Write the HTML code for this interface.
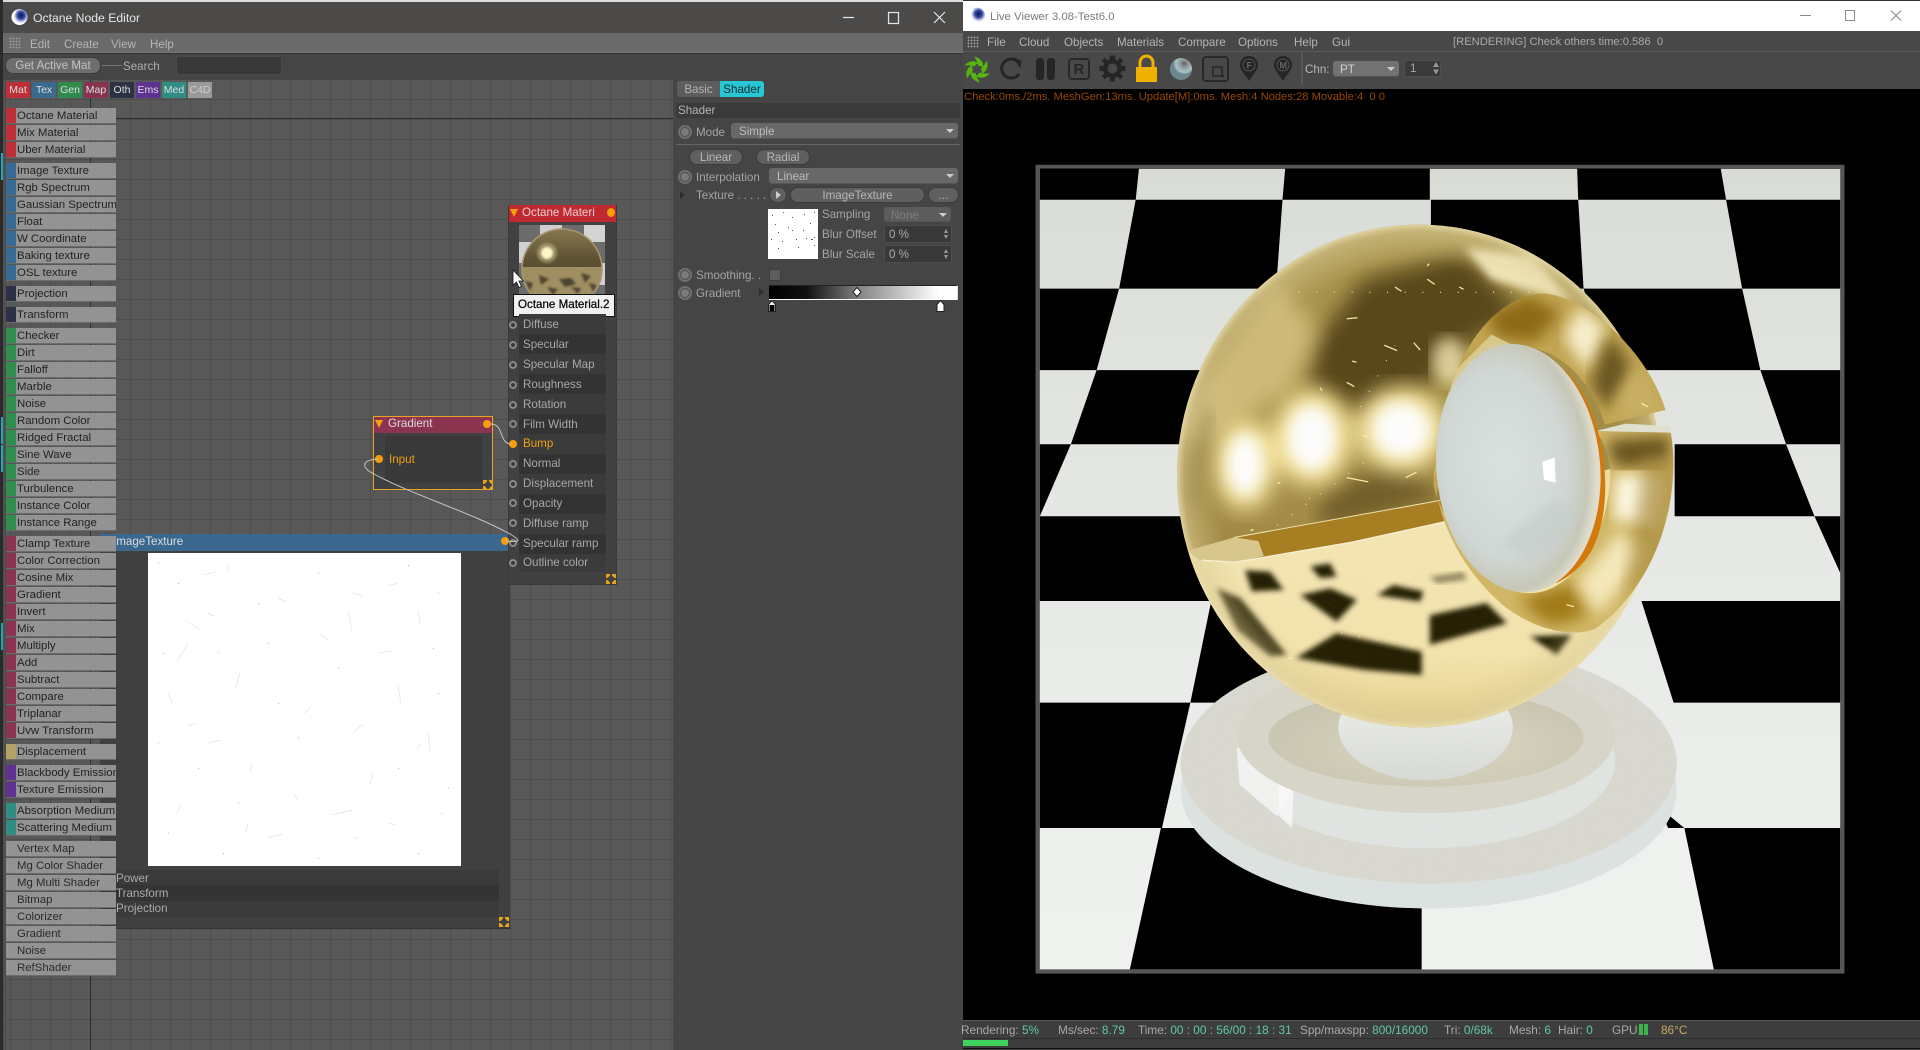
<!DOCTYPE html>
<html><head><meta charset="utf-8"><title>Octane</title>
<style>
*{box-sizing:border-box}
html,body{margin:0;padding:0;width:1920px;height:1050px;overflow:hidden;background:#222;font-family:"Liberation Sans",sans-serif}
.a{position:absolute}
.t{position:absolute;white-space:nowrap;line-height:14px;height:14px;margin-top:1px}
.li{position:absolute;left:6px;width:110px;height:16px;background:#939393;border-bottom:1.5px solid #6b6b6b;font-size:11.4px;line-height:17px;color:#222;padding-left:11px;white-space:nowrap;overflow:hidden}
.li i{position:absolute;left:0;top:0;width:10px;height:16px}
.tab{position:absolute;top:82px;width:24px;height:16px;font-size:10.5px;line-height:17px;text-align:center;color:#ddd}
.r{position:absolute;left:519px;width:87px;height:20px}
.s{position:absolute;left:509px;width:8px;height:8px;border-radius:50%;border:2px solid #8a8a8a;background:#3a3a3a}
.l{position:absolute;left:523px;font-size:11.6px;line-height:14px;color:#a8a8a8;white-space:nowrap;margin-top:1px}
.rd{position:absolute;left:678px;width:14px;height:14px;border-radius:50%;border:2px solid #6e6e6e;background:#7a7a7a;box-shadow:inset 0 0 0 1px #4a4a4a}
.lb{position:absolute;font-size:11.6px;line-height:14px;color:#a5a5a5;white-space:nowrap;margin-top:1px}
.dd{position:absolute;background:#686868;border-radius:3px;font-size:11.6px;line-height:16px;color:#bdbdbd;padding:1px 0 0 8px;box-shadow:inset 0 -1px 0 #555}
.dd:after{content:"";position:absolute;right:4px;top:6px;border-left:4px solid transparent;border-right:4px solid transparent;border-top:4px solid #ccc}
.bt{position:absolute;background:#5f5f5f;border-radius:9px;border:1px solid #3c3c3c;font-size:11.6px;line-height:14px;color:#b8b8b8;text-align:center;white-space:nowrap;padding-top:1px}
.fld{position:absolute;left:884px;width:68px;height:18px;background:#393939;border:1px solid #4d4d4d;border-radius:2px;font-size:11.6px;line-height:16px;color:#aaa;padding:1px 0 0 4px}
.fld:after{content:"";position:absolute;right:3px;top:3px;border-left:2.5px solid transparent;border-right:2.5px solid transparent;border-bottom:4px solid #999}
.fld:before{content:"";position:absolute;right:3px;bottom:3px;border-left:2.5px solid transparent;border-right:2.5px solid transparent;border-top:4px solid #999}
.m{position:absolute;top:35px;font-size:11.6px;line-height:14px;color:#b5b5b5;white-space:nowrap}
.m2{position:absolute;top:36px;font-size:11.6px;line-height:14px;color:#b5b5b5;white-space:nowrap}
.st{position:absolute;top:1023px;font-size:11.8px;line-height:14px;color:#a8a8a8;white-space:nowrap}
.st b{font-weight:normal;color:#5fc7a7}
.dots{background-image:radial-gradient(#999 0.8px,transparent 1px);background-size:3px 3px}
</style></head><body>

<!-- left window -->
<div class="a" style="left:0;top:0;width:3px;height:1050px;background:#2b2b2b"></div>
<div class="a" style="left:1px;top:153px;width:2px;height:27px;background:#1fa9b8"></div>
<div class="a" style="left:1px;top:417px;width:2px;height:27px;background:#1fa9b8"></div>
<div class="a" style="left:1px;top:445px;width:2px;height:27px;background:#1fa9b8"></div>
<div class="a" style="left:1px;top:623px;width:2px;height:27px;background:#1fa9b8"></div>

<div class="a" style="left:3px;top:0;width:960px;height:33px;background:#4b4a48;border-top:2px solid #dcdcdc"></div>
<svg class="a" style="left:10px;top:7px" width="20" height="20" viewBox="0 0 20 20"><defs><radialGradient id="c4" cx=".6" cy=".4"><stop offset="0" stop-color="#0c1440"/><stop offset=".45" stop-color="#3346a8"/><stop offset=".8" stop-color="#c9cde8"/><stop offset="1" stop-color="#fff"/></radialGradient></defs><circle cx="9.5" cy="10" r="8" fill="url(#c4)"/><path d="M6 4.5A6.5 6.5 0 0 0 6 15" stroke="#fff" stroke-width="1.6" fill="none"/></svg>
<div class="t" style="left:33px;top:10px;font-size:12.2px;color:#e6e6e6">Octane Node Editor</div>
<svg class="a" style="left:840px;top:8px" width="112" height="20" fill="none" stroke="#e8e8e8" stroke-width="1.2"><path d="M3 9.5H14"/><rect x="48.5" y="4.5" width="10" height="11"/><path d="M94 4L105 15M105 4L94 15"/></svg>

<div class="a" style="left:3px;top:33px;width:960px;height:20px;background:#6a6a6a;border-bottom:1px solid #777"></div>
<div class="a" style="left:3px;top:53px;width:960px;height:1px;background:#333"></div>
<div class="a dots" style="left:9px;top:37px;width:12px;height:12px"></div>
<div class="m" style="left:30px;top:38px">Edit</div><div class="m" style="left:64px;top:38px">Create</div><div class="m" style="left:111px;top:38px">View</div><div class="m" style="left:150px;top:38px">Help</div>

<div class="a" style="left:3px;top:54px;width:960px;height:26px;background:#454545"></div>
<div class="bt" style="left:5px;top:57px;width:96px;height:17px;line-height:14px;border-radius:8px;background:#6e6e6e;color:#c4c4c4">Get Active Mat</div>
<div class="a" style="left:102px;top:65px;width:20px;height:1px;background:#777"></div>
<div class="lb" style="left:123px;top:59px;color:#b0b0b0">Search</div>
<div class="a" style="left:176px;top:56px;width:106px;height:19px;background:#383838;border:1px solid #4b4b4b;border-radius:3px"></div>

<!-- grid -->
<div class="a" style="left:3px;top:80px;width:670px;height:970px;background-color:#585858;background-image:linear-gradient(#4e4e4e 1px,transparent 1px),linear-gradient(90deg,#4e4e4e 1px,transparent 1px);background-size:20px 20px;background-position:0 19px,7px 0"></div>
<div class="a" style="left:3px;top:118px;width:670px;height:1px;background:#2d2d2d"></div>
<div class="a" style="left:90px;top:80px;width:1px;height:970px;background:#2d2d2d"></div>
<div class="a" style="left:3px;top:80px;width:3px;height:970px;background:#4f4f4f"></div>

<!-- tabs -->
<div class="tab" style="left:6px;background:#bf2f37">Mat</div>
<div class="tab" style="left:32px;background:#3a6a8e">Tex</div>
<div class="tab" style="left:58px;background:#2f8a4c">Gen</div>
<div class="tab" style="left:84px;background:#87334f">Map</div>
<div class="tab" style="left:110px;background:#2d3144">Oth</div>
<div class="tab" style="left:136px;background:#5f3291">Ems</div>
<div class="tab" style="left:162px;background:#2f8d83">Med</div>
<div class="tab" style="left:188px;background:#9a9a9a;color:#ccc">C4D</div>

<!-- image texture node -->
<div class="a" style="left:100px;top:534px;width:410px;height:395px;background:#404040;border-bottom:1px solid #333"></div>
<div class="a" style="left:100px;top:534px;width:410px;height:17px;background:#3a688f"></div>
<div class="t" style="left:113px;top:534px;font-size:11.6px;color:#ddd">ImageTexture</div>
<div class="a" style="left:148px;top:553px;width:313px;height:313px;background:#fff"></div>
<svg class="a" style="left:148px;top:553px" width="313" height="313" fill="none" stroke="#e2e2e2" stroke-width=".7"><path d="M37 67l14 9M40 90l-11 18M200 58l4 20M270 57l2 15M55 22l12-3M130 45l8 4M172 81l8 6M240 33l10-3M20 140l4 10M92 120l-5 16M162 155l-6 5M205 180l10-9M60 190l13-3M250 132l3 19M104 210l-2 9M29 260l4-8M183 262l22-5M225 220l-3 12M280 180l2 18M120 285l14-4M205 40l9 3M145 240l6 8M60 60l6 3M240 270l8 2M296 262l-5-3M273 190l-4 6M230 100l14-2M40 173l8-3M100 270l-2 9"/><path d="M10 10l1 0M30 30l1 1M80 15l1 0M110 50l1 1M170 20l1 0M260 12l1 1M290 40l1 0M15 100l1 1M70 100l1 0M120 90l1 1M190 115l1 0M285 95l1 1M10 190l1 0M50 215l1 1M150 185l1 0M250 215l1 1M300 235l1 0M20 280l1 0M75 300l1 1M170 305l1 0M270 300l1 1M208 285l1 0M130 150l1 1M90 250l1 0M290 140l1 1" stroke="#bbb" stroke-width="1"/></svg>
<div class="a" style="left:100px;top:870px;width:399px;height:15px;background:#3a3a3a"></div>
<div class="a" style="left:100px;top:885px;width:399px;height:16px;background:#343434"></div>
<div class="a" style="left:100px;top:901px;width:399px;height:16px;background:#3a3a3a"></div>
<div class="t" style="left:116px;top:871px;font-size:11.6px;color:#aaa">Power</div>
<div class="t" style="left:116px;top:886px;font-size:11.6px;color:#aaa">Transform</div>
<div class="t" style="left:116px;top:901px;font-size:11.6px;color:#aaa">Projection</div>
<svg class="a" style="left:499px;top:917px" width="10" height="10" fill="#e5a41a"><path d="M0 0h4v1.5L1.500 4H0zM10 0H6v1.500L8.500 4H10zM0 10h4V8.500L1.500 6H0zM10 10H6V8.500L8.500 6H10z"/></svg>

<!-- octane material node -->
<div class="a" style="left:508px;top:205px;width:109px;height:380px;background:#414141;border:1px solid #383838"></div>
<div class="a" style="left:509px;top:205px;width:107px;height:17px;background:#c0292f"></div>
<svg class="a" style="left:510px;top:208px" width="10" height="10"><path d="M0 1H8L4 9z" fill="#f0a010"/></svg>
<div class="t" style="left:522px;top:205px;font-size:11.6px;color:#e8d0d0">Octane Materi</div>
<div class="a" style="left:607px;top:208px;width:8px;height:9px;border-radius:50%;background:#f59e0b"></div>
<svg class="a" style="left:519px;top:225px" width="86" height="72" viewBox="0 0 86 72">
<defs><linearGradient id="ps" x1="0" y1="0" x2="0" y2="1"><stop offset="0" stop-color="#857850"/><stop offset=".4" stop-color="#5c5032"/><stop offset=".55" stop-color="#5a4d30"/></linearGradient><clipPath id="pc"><circle cx="43" cy="44" r="40"/></clipPath><filter id="pb"><feGaussianBlur stdDeviation="1"/></filter></defs>
<rect width="86" height="72" fill="#6c6c6c"/><rect x="21" y="0" width="22" height="17" fill="#cfcfcf"/><rect x="65" y="0" width="21" height="17" fill="#d4d4d4"/><rect x="0" y="17" width="21" height="21" fill="#d0d0d0"/><rect x="43" y="17" width="22" height="21" fill="#cfcfcf"/><rect x="21" y="38" width="22" height="22" fill="#cfcfcf"/><rect x="65" y="38" width="21" height="22" fill="#cfcfcf"/>
<circle cx="43" cy="44" r="40" fill="url(#ps)"/>
<g clip-path="url(#pc)"><rect x="0" y="42" width="86" height="44" fill="#a08f62"/><path d="M20 50l10 4-8 6zM40 54l12-1 5 6-11 3zM62 48l10 3-6 7zM6 56l8 2-3 8zM28 62l11 2-5 6zM52 62l10 1-3 6zM70 58l8 2-4 7z" fill="#4e4530" filter="url(#pb)"/></g>
<circle cx="28" cy="28" r="10" fill="#f7e8b0" filter="url(#pb)" opacity=".35"/><circle cx="28" cy="28" r="6" fill="#fff7c8" filter="url(#pb)"/>
<circle cx="43" cy="44" r="40" fill="none" stroke="#a9966a" stroke-width="1.500"/></svg>
<svg class="a" style="left:512px;top:269px" width="14" height="20"><path d="M1 1V16L4.500 13 7 18.500 9.500 17.500 7 12H11.500z" fill="#fff" stroke="#111" stroke-width=".8"/></svg>
<div class="a" style="left:513px;top:294px;width:102px;height:23px;background:#f0f0f0;border:1.500px solid #111"></div>
<div class="t" style="left:518px;top:297px;font-size:11.6px;color:#0a0a0a;-webkit-text-stroke:.25px #000">Octane Material.2</div>

<div class="r" style="top:314px;background:#3b3b3b"></div><div class="r" style="top:334px;background:#333"></div><div class="r" style="top:354px;background:#3b3b3b"></div><div class="r" style="top:374px;background:#333"></div><div class="r" style="top:394px;background:#3b3b3b"></div><div class="r" style="top:414px;background:#333"></div><div class="r" style="top:434px;background:#3b3b3b"></div><div class="r" style="top:454px;background:#333"></div><div class="r" style="top:474px;background:#3b3b3b"></div><div class="r" style="top:494px;background:#333"></div><div class="r" style="top:514px;background:#3b3b3b"></div><div class="r" style="top:534px;background:#333"></div><div class="r" style="top:554px;height:18px;background:#3b3b3b"></div>
<div class="s" style="top:321px"></div><div class="l" style="top:317px">Diffuse</div>
<div class="s" style="top:341px"></div><div class="l" style="top:337px">Specular</div>
<div class="s" style="top:361px"></div><div class="l" style="top:357px">Specular Map</div>
<div class="s" style="top:381px"></div><div class="l" style="top:377px">Roughness</div>
<div class="s" style="top:401px"></div><div class="l" style="top:397px">Rotation</div>
<div class="s" style="top:420px"></div><div class="l" style="top:417px">Film Width</div>
<div class="s" style="top:440px;background:#f59e0b;border-color:#f59e0b"></div><div class="l" style="top:436px;color:#f0a010">Bump</div>
<div class="s" style="top:460px"></div><div class="l" style="top:456px">Normal</div>
<div class="s" style="top:480px"></div><div class="l" style="top:476px">Displacement</div>
<div class="s" style="top:499px"></div><div class="l" style="top:496px">Opacity</div>
<div class="s" style="top:519px"></div><div class="l" style="top:516px">Diffuse ramp</div>
<div class="s" style="top:539px"></div><div class="l" style="top:536px">Specular ramp</div>
<div class="s" style="top:559px"></div><div class="l" style="top:555px">Outline color</div>
<svg class="a" style="left:606px;top:574px" width="10" height="10" fill="#e5a41a"><path d="M0 0h4v1.500L1.500 4H0zM10 0H6v1.500L8.500 4H10zM0 10h4V8.500L1.500 6H0zM10 10H6V8.500L8.500 6H10z"/></svg>

<!-- gradient node -->
<div class="a" style="left:373px;top:416px;width:120px;height:74px;background:#414141;border:1px solid #eaa420"></div>
<div class="a" style="left:374px;top:417px;width:118px;height:16px;background:#8a3450"></div>
<svg class="a" style="left:375px;top:419px" width="10" height="10"><path d="M0 1H8L4 9z" fill="#f0a010"/></svg>
<div class="t" style="left:388px;top:416px;font-size:11.6px;color:#ddd">Gradient</div>
<div class="a" style="left:385px;top:436px;width:97px;height:47px;background:#393939"></div>
<div class="t" style="left:389px;top:452px;font-size:11.6px;color:#f0a010">Input</div>
<div class="a" style="left:375px;top:455px;width:8px;height:8px;border-radius:50%;background:#f59e0b"></div>
<div class="a" style="left:483px;top:420px;width:8px;height:8px;border-radius:50%;background:#f59e0b"></div>
<div class="a" style="left:501px;top:537px;width:8px;height:8px;border-radius:50%;background:#f59e0b"></div>
<svg class="a" style="left:483px;top:480px" width="10" height="10" fill="#e5a41a"><path d="M0 0h4v1.500L1.500 4H0zM10 0H6v1.500L8.500 4H10zM0 10h4V8.500L1.500 6H0zM10 10H6V8.500L8.500 6H10z"/></svg>

<!-- wires -->
<svg class="a" style="left:0;top:0" width="640" height="600" fill="none" stroke="#c4c4c4" stroke-width="1"><path d="M491 424C504 424 499 444 511 444"/><path d="M378 459C360 460 362 468 374 474C410 494 470 512 510 534C525 543 516 542 506 541"/></svg>

<!-- list -->
<div class="li" style="top:108px"><i style="background:#bf2f37"></i>Octane Material</div>
<div class="li" style="top:125px"><i style="background:#bf2f37"></i>Mix Material</div>
<div class="li" style="top:142px"><i style="background:#bf2f37"></i>Uber Material</div>
<div class="li" style="top:163px"><i style="background:#376b95"></i>Image Texture</div>
<div class="li" style="top:180px"><i style="background:#376b95"></i>Rgb Spectrum</div>
<div class="li" style="top:197px"><i style="background:#376b95"></i>Gaussian Spectrum</div>
<div class="li" style="top:214px"><i style="background:#376b95"></i>Float</div>
<div class="li" style="top:231px"><i style="background:#376b95"></i>W Coordinate</div>
<div class="li" style="top:248px"><i style="background:#376b95"></i>Baking texture</div>
<div class="li" style="top:265px"><i style="background:#376b95"></i>OSL texture</div>
<div class="li" style="top:286px"><i style="background:#2d3148"></i>Projection</div>
<div class="li" style="top:307px"><i style="background:#2d3148"></i>Transform</div>
<div class="li" style="top:328px"><i style="background:#2f8f4e"></i>Checker</div>
<div class="li" style="top:345px"><i style="background:#2f8f4e"></i>Dirt</div>
<div class="li" style="top:362px"><i style="background:#2f8f4e"></i>Falloff</div>
<div class="li" style="top:379px"><i style="background:#2f8f4e"></i>Marble</div>
<div class="li" style="top:396px"><i style="background:#2f8f4e"></i>Noise</div>
<div class="li" style="top:413px"><i style="background:#2f8f4e"></i>Random Color</div>
<div class="li" style="top:430px"><i style="background:#2f8f4e"></i>Ridged Fractal</div>
<div class="li" style="top:447px"><i style="background:#2f8f4e"></i>Sine Wave</div>
<div class="li" style="top:464px"><i style="background:#2f8f4e"></i>Side</div>
<div class="li" style="top:481px"><i style="background:#2f8f4e"></i>Turbulence</div>
<div class="li" style="top:498px"><i style="background:#2f8f4e"></i>Instance Color</div>
<div class="li" style="top:515px"><i style="background:#2f8f4e"></i>Instance Range</div>
<div class="li" style="top:536px"><i style="background:#8b3350"></i>Clamp Texture</div>
<div class="li" style="top:553px"><i style="background:#8b3350"></i>Color Correction</div>
<div class="li" style="top:570px"><i style="background:#8b3350"></i>Cosine Mix</div>
<div class="li" style="top:587px"><i style="background:#8b3350"></i>Gradient</div>
<div class="li" style="top:604px"><i style="background:#8b3350"></i>Invert</div>
<div class="li" style="top:621px"><i style="background:#8b3350"></i>Mix</div>
<div class="li" style="top:638px"><i style="background:#8b3350"></i>Multiply</div>
<div class="li" style="top:655px"><i style="background:#8b3350"></i>Add</div>
<div class="li" style="top:672px"><i style="background:#8b3350"></i>Subtract</div>
<div class="li" style="top:689px"><i style="background:#8b3350"></i>Compare</div>
<div class="li" style="top:706px"><i style="background:#8b3350"></i>Triplanar</div>
<div class="li" style="top:723px"><i style="background:#8b3350"></i>Uvw Transform</div>
<div class="li" style="top:744px"><i style="background:#b3a268"></i>Displacement</div>
<div class="li" style="top:765px"><i style="background:#5f3291"></i>Blackbody Emission</div>
<div class="li" style="top:782px"><i style="background:#5f3291"></i>Texture Emission</div>
<div class="li" style="top:803px"><i style="background:#2f8d83"></i>Absorption Medium</div>
<div class="li" style="top:820px"><i style="background:#2f8d83"></i>Scattering Medium</div>
<div class="li" style="top:841px;color:#2a2a2a">Vertex Map</div>
<div class="li" style="top:858px;color:#2a2a2a">Mg Color Shader</div>
<div class="li" style="top:875px;color:#2a2a2a">Mg Multi Shader</div>
<div class="li" style="top:892px;color:#2a2a2a">Bitmap</div>
<div class="li" style="top:909px;color:#2a2a2a">Colorizer</div>
<div class="li" style="top:926px;color:#2a2a2a">Gradient</div>
<div class="li" style="top:943px;color:#2a2a2a">Noise</div>
<div class="li" style="top:960px;color:#2a2a2a">RefShader</div>

<!-- attribute panel -->
<div class="a" style="left:673px;top:80px;width:290px;height:970px;background:#454545"></div>
<div class="a" style="left:677px;top:81px;width:43px;height:16px;background:#5d5d5d;border-radius:3px 0 0 3px;font-size:11.6px;line-height:17px;color:#b4b4b4;text-align:center">Basic</div>
<div class="a" style="left:720px;top:81px;width:44px;height:16px;background:#27c7d6;border-radius:0 3px 3px 0;font-size:11.6px;line-height:17px;color:#102a2e;text-align:center">Shader</div>
<div class="a" style="left:676px;top:103px;width:284px;height:15px;background:#3a3a3a;font-size:11.6px;line-height:16px;color:#b5b5b5;padding-left:2px">Shader</div>
<div class="rd" style="top:125px"></div><div class="lb" style="left:696px;top:125px">Mode</div>
<div class="dd" style="left:731px;top:123px;width:227px;height:16px">Simple</div>
<div class="a" style="left:676px;top:144px;width:284px;height:1px;background:#666"></div>
<div class="bt" style="left:689px;top:149px;width:54px;height:16px">Linear</div>
<div class="bt" style="left:756px;top:149px;width:54px;height:16px">Radial</div>
<div class="rd" style="top:170px"></div><div class="lb" style="left:696px;top:170px">Interpolation</div>
<div class="dd" style="left:769px;top:168px;width:189px;height:16px">Linear</div>
<svg class="a" style="left:680px;top:191px" width="6" height="8"><path d="M0 0L5 4 0 8z" fill="#2e2e2e"/></svg>
<div class="lb" style="left:696px;top:188px">Texture . . . . .</div>
<div class="bt" style="left:769px;top:187px;width:18px;height:16px"></div>
<svg class="a" style="left:776px;top:191px" width="6" height="8"><path d="M0 0L5 4 0 8z" fill="#ccc"/></svg>
<div class="bt" style="left:790px;top:187px;width:135px;height:16px">ImageTexture</div>
<div class="bt" style="left:928px;top:187px;width:31px;height:16px">...</div>
<div class="a" style="left:768px;top:209px;width:50px;height:50px;background:#fff"></div>
<svg class="a" style="left:768px;top:209px" width="50" height="50" fill="#555"><path d="M4 6h1v1H4zM15 3h1v1h-1zM24 8h1v1h-1zM36 5h1v1h-1zM46 3h1v1h-1zM7 15h1v1H7zM20 18h1v1h-1zM42 14h1v1h-1zM10 23h1v1H10zM24 21h1v1h-1zM35 21h1v1h-1zM46 28h1v1h-1zM3 30h1v1H3zM14 32h1v1h-1zM28 30h1v1h-1zM38 29h1v1h-1zM43 30h2v1h-2zM10 39h1v1H10zM30 38h1v1h-1zM46 36h1v1h-1z"/></svg>
<div class="lb" style="left:822px;top:207px">Sampling</div>
<div class="dd" style="left:884px;top:207px;width:67px;height:15px;background:#5c5c5c;color:#7f7f7f;line-height:15px;padding-left:7px">None</div>
<div class="lb" style="left:822px;top:227px">Blur Offset</div>
<div class="fld" style="top:225px">0 %</div>
<div class="lb" style="left:822px;top:247px">Blur Scale</div>
<div class="fld" style="top:245px">0 %</div>
<div class="rd" style="top:268px"></div><div class="lb" style="left:696px;top:268px">Smoothing. .</div>
<div class="a" style="left:769px;top:269px;width:12px;height:12px;background:#5d5d5d;border-radius:2px;border:1px solid #3e3e3e"></div>
<div class="rd" style="top:286px"></div><div class="lb" style="left:696px;top:286px">Gradient</div>
<svg class="a" style="left:759px;top:288px" width="6" height="8"><path d="M0 0L5 4 0 8z" fill="#2e2e2e"/></svg>
<div class="a" style="left:769px;top:285px;width:189px;height:15px;background:linear-gradient(90deg,#000,#111 20%,#8a8a8a 50%,#fff 90%);border-bottom:1.500px solid #fff;border-top:1px solid #222;border-right:1px solid #ddd"></div>
<svg class="a" style="left:852px;top:286px" width="10" height="12"><path d="M5 1.500L9 6 5 10.500 1 6z" fill="#fff" stroke="#222"/></svg>
<svg class="a" style="left:766px;top:299px" width="180" height="14"><path d="M2.500 12.500V5.500L6 1.500 9.500 5.500V12.500z" fill="#eee" stroke="#222"/><rect x="3.500" y="6" width="5" height="6" fill="#000"/><path d="M171 12.500V5.500L174.500 1.500 178 5.500V12.500z" fill="#fff" stroke="#222"/></svg>

<!-- live viewer -->
<div class="a" style="left:963px;top:0;width:957px;height:1050px;background:#000"></div>
<div class="a" style="left:963px;top:0;width:957px;height:31px;background:#fff;border-top:1px solid #333"></div>
<svg class="a" style="left:967px;top:5px" width="20" height="20" viewBox="0 0 20 20"><circle cx="10" cy="10.500" r="8" fill="url(#c4)"/><path d="M6 5A6.500 6.500 0 0 0 6 15.500" stroke="#fff" stroke-width="1.600" fill="none"/></svg>
<div class="t" style="left:990px;top:9px;font-size:11.4px;color:#7a7a7a">Live Viewer 3.08-Test6.0</div>
<svg class="a" style="left:1795px;top:6px" width="120" height="20" fill="none" stroke="#8a8a8a" stroke-width="1"><path d="M5 9.500H16"/><rect x="50.500" y="4.500" width="9" height="10"/><path d="M96 4.500L106 14.500M106 4.500L96 14.500"/></svg>
<div class="a" style="left:963px;top:31px;width:957px;height:58px;background:#484848"></div>
<div class="a" style="left:963px;top:51px;width:957px;height:1px;background:#5c5c5c"></div>
<div class="a dots" style="left:967px;top:36px;width:12px;height:12px"></div>
<div class="m2" style="left:987px">File</div><div class="m2" style="left:1019px">Cloud</div><div class="m2" style="left:1064px">Objects</div><div class="m2" style="left:1117px">Materials</div><div class="m2" style="left:1178px">Compare</div><div class="m2" style="left:1238px">Options</div><div class="m2" style="left:1294px">Help</div><div class="m2" style="left:1332px">Gui</div>
<div class="t" style="left:1453px;top:34px;font-size:11.200px;color:#aaa">[RENDERING] Check others time:0.586&nbsp; 0</div>
<!-- icons -->
<svg class="a" style="left:963px;top:52px" width="480" height="36" viewBox="963 52 480 36">
<g transform="translate(977 69.500) scale(.8)" fill="#56b50e"><path d="M1.500-4.500C1-9-1-12-3.500-16C3-15 9-10 7.500-2C6.500-3.500 4-5 1.500-4.500z"/><path d="M1.500-4.500C1-9-1-12-3.500-16C3-15 9-10 7.500-2C6.500-3.500 4-5 1.500-4.500z" transform="rotate(60)"/><path d="M1.500-4.500C1-9-1-12-3.500-16C3-15 9-10 7.500-2C6.500-3.500 4-5 1.500-4.500z" transform="rotate(120)"/><path d="M1.500-4.500C1-9-1-12-3.500-16C3-15 9-10 7.500-2C6.500-3.500 4-5 1.500-4.500z" transform="rotate(180)"/><path d="M1.500-4.500C1-9-1-12-3.500-16C3-15 9-10 7.500-2C6.500-3.500 4-5 1.500-4.500z" transform="rotate(240)"/><path d="M1.500-4.500C1-9-1-12-3.500-16C3-15 9-10 7.500-2C6.500-3.500 4-5 1.500-4.500z" transform="rotate(300)"/></g>
<path d="M1018 62A9.500 9.500 0 1 0 1019 74" fill="none" stroke="#252525" stroke-width="3"/><path d="M1014 58L1021 61 1020 67z" fill="#252525" stroke="#252525"/>
<rect x="1036" y="58" width="8" height="22" rx="3" fill="#252525"/><rect x="1047" y="58" width="8" height="22" rx="3" fill="#252525"/>
<rect x="1069" y="59" width="20" height="20" rx="3" fill="none" stroke="#252525" stroke-width="1.800"/><text x="1073.500" y="74" font-family="Liberation Sans" font-size="15" font-weight="bold" fill="#262626">R</text>
<g transform="translate(1112.500 68.500)"><circle r="9.500" fill="#252525"/><path d="M-2.500-13H2.500V-7H-2.500zM-2.500 13H2.500V7H-2.500zM-13-2.500V2.500H-7V-2.500zM13-2.500V2.500H7V-2.500zM-11-7.500L-7.500-11-4-6-6-4zM11 7.500L7.500 11 4 6 6 4zM11-7.500L7.500-11 4-6 6-4zM-11 7.500L-7.500 11-4 6-6 4z" fill="#252525"/><circle r="5" fill="#484848"/></g>
<rect x="1136" y="67" width="21" height="15" fill="#efb000"/><path d="M1140 67V62.500A6.500 6.500 0 0 1 1153 62.500V67" fill="none" stroke="#efb000" stroke-width="3"/>
<defs><radialGradient id="bb" cx=".65" cy=".25"><stop offset="0" stop-color="#6e5b50"/><stop offset=".35" stop-color="#8d9a9c"/><stop offset=".8" stop-color="#a9c3c7"/><stop offset="1" stop-color="#6d8790"/></radialGradient></defs><circle cx="1181" cy="69" r="11" fill="url(#bb)"/>
<rect x="1203" y="57" width="25" height="24" rx="3" fill="none" stroke="#252525" stroke-width="1.800"/><path d="M1213 67H1222V76H1213z" fill="none" stroke="#252525" stroke-width="1.500"/><circle cx="1222.500" cy="76" r="1.500" fill="#252525"/>
<path d="M1249 81C1243 72 1240 69 1240 65A9 9 0 0 1 1258 65C1258 69 1255 72 1249 81z" fill="#252525"/><circle cx="1249" cy="65" r="6" fill="none" stroke="#555"/><text x="1246.500" y="68.500" font-family="Liberation Sans" font-size="9" font-weight="bold" fill="#666">F</text>
<path d="M1283 81C1277 72 1274 69 1274 65A9 9 0 0 1 1292 65C1292 69 1289 72 1283 81z" fill="#252525"/><circle cx="1283" cy="65" r="6" fill="none" stroke="#555"/><text x="1279.500" y="68.500" font-family="Liberation Sans" font-size="9" font-weight="bold" fill="#666">M</text>
<path d="M1302 53V85" stroke="#6a6a6a"/>
</svg>
<div class="t" style="left:1305px;top:62px;font-size:11.600px;color:#b5b5b5">Chn:</div>
<div class="dd" style="left:1333px;top:61px;width:66px;height:16px;padding-left:7px;background:#727272;color:#d0d0d0">PT</div>
<div class="a" style="left:1404px;top:60px;width:37px;height:17px;background:#3a3a3a;border:1px solid #505050;border-radius:2px;font-size:11.600px;line-height:16px;color:#aaa;padding-left:5px">1</div>
<svg class="a" style="left:1433px;top:62px" width="6" height="13" fill="#999"><path d="M3 0L6 5H0zM0 7.500H6L3 12.500z"/></svg>
<div class="t" style="left:964px;top:89px;font-size:11.200px;color:#964805">Check:0ms./2ms. MeshGen:13ms. Update[M]:0ms. Mesh:4 Nodes:28 Movable:4&nbsp; 0 0</div>

<!-- render -->
<svg class="a" style="left:1020px;top:160px" width="840" height="830" viewBox="0 0 1568 1568" preserveAspectRatio="none">
<defs>
<filter id="b3"><feGaussianBlur stdDeviation="5"/></filter>
<filter id="b8"><feGaussianBlur stdDeviation="8"/></filter>
<filter id="b14"><feGaussianBlur stdDeviation="14"/></filter>
<filter id="b18"><feGaussianBlur stdDeviation="20"/></filter>
<filter id="gn" x="0" y="0" width="1" height="1"><feTurbulence type="fractalNoise" baseFrequency="1.100" numOctaves="2" seed="3"/><feColorMatrix values="0 0 0 0 .45 0 0 0 0 .42 0 0 0 0 .3 1.500 0 0 0 -.62"/></filter>
<linearGradient id="fl" x1="0" y1="0" x2="0" y2="1"><stop offset="0" stop-color="#d9dcd6"/><stop offset=".5" stop-color="#e7e9e6"/><stop offset="1" stop-color="#f0f2f0"/></linearGradient>
<linearGradient id="sg" x1="0" y1="0" x2="0" y2="1"><stop offset="0" stop-color="#ad9852"/><stop offset=".35" stop-color="#a38c44"/><stop offset=".65" stop-color="#a38a44"/></linearGradient>
<linearGradient id="lg" x1="0" y1="0" x2="0" y2="1"><stop offset="0" stop-color="#eddc9e"/><stop offset=".25" stop-color="#f5e7b4"/><stop offset=".7" stop-color="#f4e4ad"/><stop offset=".85" stop-color="#eddb9c"/><stop offset="1" stop-color="#dfc987"/></linearGradient>
<radialGradient id="edge" cx=".5" cy=".5" r=".5"><stop offset=".84" stop-color="#d9c88c" stop-opacity="0"/><stop offset=".97" stop-color="#dccd95" stop-opacity=".5"/><stop offset="1" stop-color="#ecdfb0" stop-opacity=".85"/></radialGradient>
<radialGradient id="ew" cx=".42" cy=".48" r=".56"><stop offset="0" stop-color="#dbe1df"/><stop offset=".68" stop-color="#d0d7d4"/><stop offset=".9" stop-color="#c6c7b8"/><stop offset="1" stop-color="#dfdccb"/></radialGradient>
<radialGradient id="dsh" cx=".55" cy=".6" r=".6"><stop offset="0" stop-color="#dcd8c4"/><stop offset="1" stop-color="#c8c5b1"/></radialGradient>
<linearGradient id="stm" x1="0" y1="0" x2="0" y2="1"><stop offset="0" stop-color="#f3f5f2"/><stop offset="1" stop-color="#d8dbd6"/></linearGradient>
<clipPath id="sc"><ellipse cx="745" cy="597" rx="452" ry="475"/></clipPath>
<clipPath id="ped"><ellipse cx="763" cy="1140" rx="463" ry="227"/><ellipse cx="745" cy="597" rx="452" ry="475"/></clipPath>
<clipPath id="r1"><path d="M772 615C775 420 860 262 975 252C1060 258 1170 360 1205 472L1092 500C1065 410 1000 352 925 350C835 358 790 470 778 640z"/></clipPath>
<clipPath id="r2"><path d="M1075 512L1215 515C1235 640 1190 800 1075 885C1030 905 950 885 895 835C835 780 795 710 780 640C820 745 880 815 945 818C1025 825 1095 720 1102 600C1102 565 1092 535 1075 512z"/></clipPath>
</defs>
<rect x="33" y="13" width="1502" height="1520" fill="url(#fl)" stroke="#565656" stroke-width="8"/>
<g fill="#000">
<path d="M37 16H222L216 75H37z"/><path d="M495 16H765V75H490z"/><path d="M1040 16H1308L1318 75H1042z"/>
<path d="M216 75H490L478 243H185z"/><path d="M767 75H1042L1052 243H767z"/><path d="M1318 75H1531V243H1348z"/>
<path d="M37 243H185L143 397H37z"/><path d="M478 243H767V397H478z"/><path d="M1052 243H1348L1382 397H1100z"/>
<path d="M143 397H480V537H95z"/><path d="M1382 397H1531V537H1430z"/>
<path d="M37 537H95L37 673z"/><path d="M1222 537H1430L1483 673H1222z"/>
<path d="M37 673H400L357 833H37z"/><path d="M1483 673H1531V780z"/>
<path d="M357 833H500V1025H318z"/><path d="M1160 833H1531V1025H1220z"/>
<path d="M37 1025H318L265 1262H37z"/>
<path d="M263 1262H750V1529H205z"/><path d="M1240 1262H1531V1529H1295z"/><path d="M1190 1220L1240 1262H1210z"/>
</g>
<path d="M750 1410L1240 1262 1295 1529H750z" fill="#eff1ef"/>
<!-- pedestal -->
<ellipse cx="763" cy="1190" rx="463" ry="224" fill="#dbe2df"/>
<ellipse cx="763" cy="1140" rx="463" ry="227" fill="#dadad2"/>
<ellipse cx="758" cy="1135" rx="353" ry="165" fill="#e2e6e3"/>
<path d="M405 1110L410 1180 480 1240 520 1160z" fill="#f2f4f2"/>
<path d="M483 1180L510 1192 508 1262 484 1240z" fill="#fbfcfb" opacity=".8"/>
<ellipse cx="758" cy="1087" rx="353" ry="147" fill="#d9d7cb"/>
<ellipse cx="758" cy="1092" rx="294" ry="92" fill="url(#dsh)"/>
<ellipse cx="757" cy="1072" rx="163" ry="100" fill="url(#stm)"/>
<!-- sphere -->
<ellipse cx="745" cy="597" rx="452" ry="475" fill="url(#sg)"/>
<g clip-path="url(#sc)">
<path d="M555 340L640 225 830 175 940 290 840 345 760 430 640 480 540 430z" fill="#574515" filter="url(#b18)"/>
<path d="M830 165L960 180 1030 270 880 225z" fill="#f5eabf" filter="url(#b8)"/>
<path d="M290 500L480 230 555 320 510 430 340 540z" fill="#d0bb78" filter="url(#b18)"/>
<path d="M560 640L700 560 790 640 560 700z" fill="#5e4c1c" filter="url(#b18)" opacity=".75"/>
<path d="M300 640L340 460 360 480 330 660z" fill="#7d6a30" filter="url(#b14)" opacity=".6"/>
<g fill="#f4e29a" filter="url(#b18)"><ellipse cx="420" cy="575" rx="58" ry="88"/><ellipse cx="545" cy="525" rx="74" ry="92"/><ellipse cx="712" cy="510" rx="84" ry="82"/></g>
<g fill="#fff" filter="url(#b14)"><ellipse cx="420" cy="575" rx="34" ry="58"/><ellipse cx="545" cy="525" rx="46" ry="62"/><ellipse cx="712" cy="510" rx="54" ry="52"/></g>
<ellipse cx="800" cy="380" rx="32" ry="46" fill="#f4e8b4" filter="url(#b14)" opacity=".8"/>
<path d="M270 748L790 652 1210 560V1090H270z" fill="url(#lg)"/>
<g fill="#241b06" filter="url(#b3)">
<path d="M420 775L467 778 492 812 433 815z"/><path d="M367 809L411 828 498 935 467 938 405 888z"/><path d="M523 822L579 809 629 831 591 872z"/><path d="M514 941L591 894 750 929 750 973 641 963z"/><path d="M765 860L871 837 909 875 765 916z"/><path d="M666 822L697 803 753 815 747 834z"/><path d="M952 900L1030 897 1002 935z"/><path d="M542 768L579 762 591 787 560 790z"/></g>
<path d="M765 787L828 778 834 793 778 800z" fill="#241b06" filter="url(#b3)" opacity=".45"/>
<ellipse cx="745" cy="597" rx="452" ry="475" fill="url(#edge)"/>
</g>
<!-- grain -->
<g clip-path="url(#ped)"><rect x="280" y="110" width="960" height="1270" filter="url(#gn)" opacity=".2"/></g>
<!-- groove -->
<path d="M313 738L400 713 785 643 795 683 620 722 400 760 335 755z" fill="#a87e22"/>
<path d="M313 738L400 713 445 720 455 748 400 760 335 755z" fill="#d8c78d"/>
<path d="M340 756L400 760 620 722 795 683" stroke="#f6efd2" stroke-width="2.500" fill="none"/>
<path d="M400 713L785 643" stroke="#eadfb0" stroke-width="2" fill="none"/>
<!-- rings -->
<path d="M772 615C775 420 860 262 975 252C1060 258 1170 360 1205 472L1092 500C1065 410 1000 352 925 350C835 358 790 470 778 640z" fill="#c2a552"/>
<g clip-path="url(#r1)"><path d="M870 290L950 255 1010 290 960 345 890 335z" fill="#8e6a18" filter="url(#b14)"/><path d="M1045 275L1095 320 1060 400 1015 335z" fill="#f7efcb" filter="url(#b14)"/><path d="M1100 330L1150 400 1095 470 1065 420z" fill="#6b5620" filter="url(#b14)"/><path d="M1150 370L1210 480 1110 495 1120 440z" fill="#c8af63" filter="url(#b14)"/><path d="M770 610L810 400 880 330 925 352 840 400 790 520z" fill="#d9c88b"/></g>
<path d="M1075 512L1215 515C1235 640 1190 800 1075 885C1030 905 950 885 895 835C835 780 795 710 780 640C820 745 880 815 945 818C1025 825 1095 720 1102 600C1102 565 1092 535 1075 512z" fill="#d0b666"/>
<g clip-path="url(#r2)"><path d="M1112 595H1198L1188 690 1108 680z" fill="#fffbe6" filter="url(#b14)"/><path d="M1095 530L1215 520 1210 575 1110 580z" fill="#69531a" filter="url(#b14)"/><path d="M930 830L1030 800 1060 860 990 880z" fill="#a17a18" filter="url(#b14)"/><path d="M1040 800L1120 700 1170 740 1080 860z" fill="#f4e8ba" filter="url(#b14)"/><path d="M1165 560L1230 560 1210 760 1130 830z" fill="#a98c40" filter="url(#b14)" opacity=".7"/></g>
<path d="M1075 512L1215 515 1215 503 1130 498z" fill="#dfe0d0"/>
<!-- inner sphere -->
<path d="M1000 385C1085 440 1115 620 1075 720 1060 760 1030 785 1000 800 1075 720 1090 620 1075 520 1060 450 1030 410 1000 385z" fill="#d47a0c"/>
<ellipse cx="930" cy="582" rx="153" ry="235" fill="url(#ew)" transform="rotate(-5 930 582)"/>
<path d="M975 570L998 562 1000 610 978 604z" fill="#fff"/>
<path d="M900 720L1000 640 1050 660 1010 720 950 760z" fill="#c4ccca" opacity=".6" filter="url(#b8)"/>
<!-- specks -->
<path d="M700 240l12 8M760 225l14 10M610 300l20-2M680 350l24 10M735 345l12 14M610 420l14 8M480 610l6 0M610 600l40 8M720 600l20-10M650 780l14 10M670 800l8 8M800 770l14 6M1100 770l10 8M1020 840l14 4M1160 460l12 6M760 200l4-4M820 240l8 4M580 560l10 4M640 520l10 4M620 380l8 2M560 430l4 6M430 700l6-2M500 940l8 2M900 900l8 4" stroke="#f6e9a8" stroke-width="2.400" fill="none"/>
<path d="M520 250L960 250M480 690L780 470M540 640L700 350M470 870L950 960" stroke="#f3e6a0" stroke-width="2" stroke-dasharray="2 31" fill="none"/>
</svg>

<!-- status -->
<div class="a" style="left:963px;top:1020px;width:957px;height:30px;background:#3d3d3d;border-top:1px solid #565656"></div>
<div class="a" style="left:963px;top:1038px;width:957px;height:1px;background:#2d2d2d"></div>
<div class="a" style="left:963px;top:1048px;width:957px;height:1px;background:#111"></div>
<div class="a" style="left:963px;top:1040px;width:45px;height:6px;background:#3ed45e"></div>
<div class="st" style="left:961px">Rendering: <b>5%</b></div>
<div class="st" style="left:1058px">Ms/sec: <b>8.79</b></div>
<div class="st" style="left:1138px">Time: <b>00 : 00 : 56/00 : 18 : 31</b></div>
<div class="st" style="left:1300px">Spp/maxspp: <b>800/16000</b></div>
<div class="st" style="left:1444px">Tri: <b>0/68k</b></div>
<div class="st" style="left:1509px">Mesh: <b>6</b></div>
<div class="st" style="left:1558px">Hair: <b>0</b></div>
<div class="st" style="left:1612px">GPU:</div>
<div class="a" style="left:1639px;top:1024px;width:4px;height:11px;background:#3eb24f"></div>
<div class="a" style="left:1644px;top:1024px;width:4px;height:11px;background:#3eb24f"></div>
<div class="st" style="left:1661px;color:#c6ad62">86°C</div>
</body></html>
